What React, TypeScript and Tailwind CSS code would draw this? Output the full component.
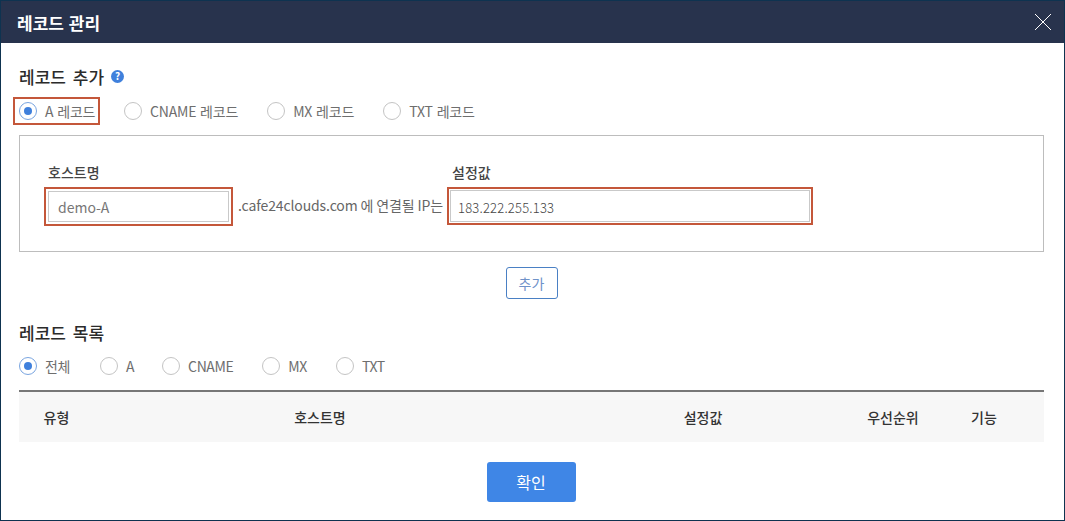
import React from "react";

function Radio({ on, label, className = "", tight }: { on?: boolean; label: string; className?: string; tight?: boolean }) {
  return (
    <div className={"flex items-center " + className}>
      <span className={"flex h-[18px] w-[18px] shrink-0 items-center justify-center rounded-full border bg-white " + (on ? "border-[#7aa5e0]" : "border-[#c4c4c4]")}>
        {on && <span className="h-2 w-2 rounded-full bg-[#3f80dc]" />}
      </span>
      <span className={"ml-[8px] text-[14px] leading-none text-[#6e6e6e] " + (tight ? "tracking-[-0.4px]" : "tracking-[-0.2px] [word-spacing:1px]")}>{label}</span>
    </div>
  );
}

export default function App() {
  return (
    <div className="h-[521px] w-[1065px] overflow-hidden border border-[#0e3350] bg-white font-['Noto_Sans_CJK_KR','Noto_Sans',sans-serif]">
      <header className="flex h-[42px] items-center justify-between bg-[#28334d] pl-[16px] pr-[12px]">
        <h1 className="text-[17px] font-bold leading-none text-white [word-spacing:1px]">레코드 관리</h1>
        <svg width="18" height="18" viewBox="0 0 18 18" className="text-white" fill="none" stroke="currentColor" strokeWidth="1">
          <path d="M1 1 17 17M17 1 1 17" />
        </svg>
      </header>

      <main className="px-[18px]">
        <div className="mt-[23px] flex h-[20px] items-center">
          <h2 className="text-[17px] font-medium leading-none text-[#2b2b2b] [word-spacing:3px]">레코드 추가</h2>
          <span className="ml-[7px] flex h-[13px] w-[13px] items-center justify-center rounded-full bg-[#3f80dc] text-[10px] font-bold leading-none text-white">?</span>
        </div>

        <div className="mt-[11px] flex h-[28px] items-center">
          <div className="-ml-[6px] flex h-[28px] w-[87px] items-center border-2 border-[#c4573a] pl-[4px]">
            <Radio on label="A 레코드" />
          </div>
          <Radio label="CNAME 레코드" className="ml-[24px]" />
          <Radio label="MX 레코드" className="ml-[29px]" />
          <Radio label="TXT 레코드" className="ml-[29px]" />
        </div>

        <section className="mt-[10px] h-[117px] w-[1025px] border border-[#bdbdbd] pl-[24px] pt-[27px]">
          <div className="flex">
            <div className="w-[189px]">
              <div className="pl-[4px] text-[14px] font-medium leading-[19px] text-[#444]">호스트명</div>
              <div className="mt-[5px] h-[39px] border-2 border-[#c4573a] p-[2px]">
                <input readOnly value="demo-A" className="h-full w-full border border-[#c9c9c9] px-[9px] text-[14px] text-[#777] outline-none" />
              </div>
            </div>
            <span className="ml-[5px] mt-[32px] w-[209px] whitespace-nowrap text-[14px] leading-[20px] tracking-[-0.12px] text-[#666]">.cafe24clouds.com 에 연결될 IP는</span>
            <div className="w-[366px]">
              <div className="pl-[5px] text-[14px] font-medium leading-[19px] text-[#444]">설정값</div>
              <div className="mt-[5px] h-[38px] border-2 border-[#c4573a] p-[1px]">
                <input readOnly value="183.222.255.133" className="h-full w-full border border-[#c9c9c9] px-[7px] pt-[3px] text-[13px] font-light tracking-[0.2px] text-[#444] outline-none" />
              </div>
            </div>
          </div>
        </section>

        <div className="mt-[15px] flex w-[1025px] justify-center">
          <button className="h-[32px] w-[52px] rounded-[3px] border border-[#4a80c4] bg-white text-[14px] text-[#6f92c9]">추가</button>
        </div>

        <h2 className="mt-[24px] text-[17px] font-medium leading-[20px] text-[#2b2b2b] [word-spacing:3px]">레코드 목록</h2>

        <div className="mt-[14px] flex h-[18px] items-center">
          <Radio on tight label="전체" />
          <Radio tight label="A" className="ml-[30px]" />
          <Radio tight label="CNAME" className="ml-[28px]" />
          <Radio tight label="MX" className="ml-[29px]" />
          <Radio tight label="TXT" className="ml-[29px]" />
        </div>

        <div className="mt-[15px] grid h-[52px] w-[1025px] grid-cols-[75px_452px_314px_66px_118px] items-center border-t-2 border-[#777] bg-[#f7f7f7] text-center text-[14px] font-medium text-[#333]">
          <span>유형</span>
          <span>호스트명</span>
          <span>설정값</span>
          <span className="whitespace-nowrap">우선순위</span>
          <span className="pr-[2px]">기능</span>
        </div>

        <div className="mt-[20px] flex w-[1025px] justify-center">
          <button className="-ml-[1px] h-[40px] w-[89px] rounded-[3px] bg-[#3f86e6] text-[16px] text-white">확인</button>
        </div>
      </main>
    </div>
  );
}
